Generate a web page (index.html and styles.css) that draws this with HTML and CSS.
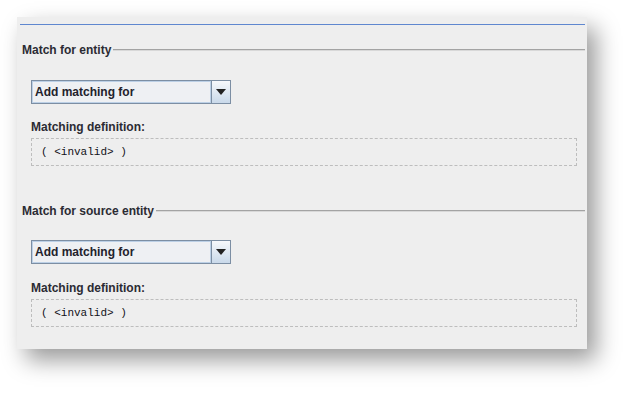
FILE: index.html
```html
<!DOCTYPE html>
<html>
<head>
<meta charset="utf-8">
<link rel="stylesheet" href="styles.css">
</head>
<body>
<div class="panel">
  <div class="topline"></div>
  <div class="section first">
    <div class="title"><span>Match for entity</span><div class="rule"></div></div>
    <div class="content">
      <div class="combo">
        <div class="combo-text">Add matching for</div>
        <div class="combo-btn"><svg width="10" height="6" viewBox="0 0 10 6"><path d="M0 0 H10 L5 6 Z" fill="#222"/></svg></div>
      </div>
      <div class="label">Matching definition:</div>
      <div class="defbox">( &lt;invalid&gt; )</div>
    </div>
  </div>
  <div class="section second">
    <div class="title"><span>Match for source entity</span><div class="rule"></div></div>
    <div class="content">
      <div class="combo">
        <div class="combo-text">Add matching for</div>
        <div class="combo-btn"><svg width="10" height="6" viewBox="0 0 10 6"><path d="M0 0 H10 L5 6 Z" fill="#222"/></svg></div>
      </div>
      <div class="label">Matching definition:</div>
      <div class="defbox">( &lt;invalid&gt; )</div>
    </div>
  </div>
</div>
</body>
</html>
```
FILE: styles.css
```css
html, body {
  margin: 0;
  padding: 0;
  background: #ffffff;
}
body {
  min-height: 397px;
  padding-top: 17px;
  box-sizing: border-box;
  font-family: "Liberation Sans", Arial, sans-serif;
  font-size: 12px;
  color: #2b2b33;
}
.panel {
  margin: 0 0 0 17px;
  width: 570px;
  height: 332px;
  box-sizing: border-box;
  padding: 7px 2px 0 3px;
  background: #eeeeee;
  box-shadow: 9px 11px 22px rgba(0, 0, 0, 0.4);
}
.topline {
  height: 1px;
  background: #5f87cf;
}
.section.first {
  margin-top: 18px;
}
.section.second {
  margin-top: 38px;
}
.title {
  display: flex;
  align-items: center;
  height: 14px;
  line-height: 14px;
  padding-left: 2px;
  font-weight: bold;
}
.rule {
  flex: 1;
  height: 1px;
  background: #a3a3a3;
  border-bottom: 1px solid #d8d8d8;
  margin-left: 2px;
}
.content {
  margin-left: 11px;
  margin-right: 8px;
  padding-top: 23px;
}
.second .content {
  padding-top: 22px;
}
.combo {
  display: flex;
  width: 200px;
  height: 24px;
  box-sizing: border-box;
  border: 1px solid #7c8ea3;
  background: #eef0f3;
}
.combo-text {
  flex: 1;
  border: 1px solid #bcd0e6;
  padding-left: 2px;
  line-height: 20px;
  font-weight: bold;
  color: #22222c;
}
.combo-btn {
  width: 18px;
  border-left: 1px solid #7c8ea3;
  background: linear-gradient(#f6f8fb, #c9d9ea);
  display: flex;
  align-items: center;
  justify-content: center;
}
.combo-btn svg {
  display: block;
}
.label {
  margin-top: 16px;
  height: 14px;
  line-height: 14px;
  font-weight: bold;
}
.second .label {
  margin-top: 17px;
}
.defbox {
  margin-top: 4px;
  height: 28px;
  box-sizing: border-box;
  border: 1px dashed #bdbdbd;
  padding-left: 9px;
  line-height: 26px;
  font-family: "Liberation Mono", "Courier New", monospace;
  font-size: 11px;
  color: #111118;
}
```
